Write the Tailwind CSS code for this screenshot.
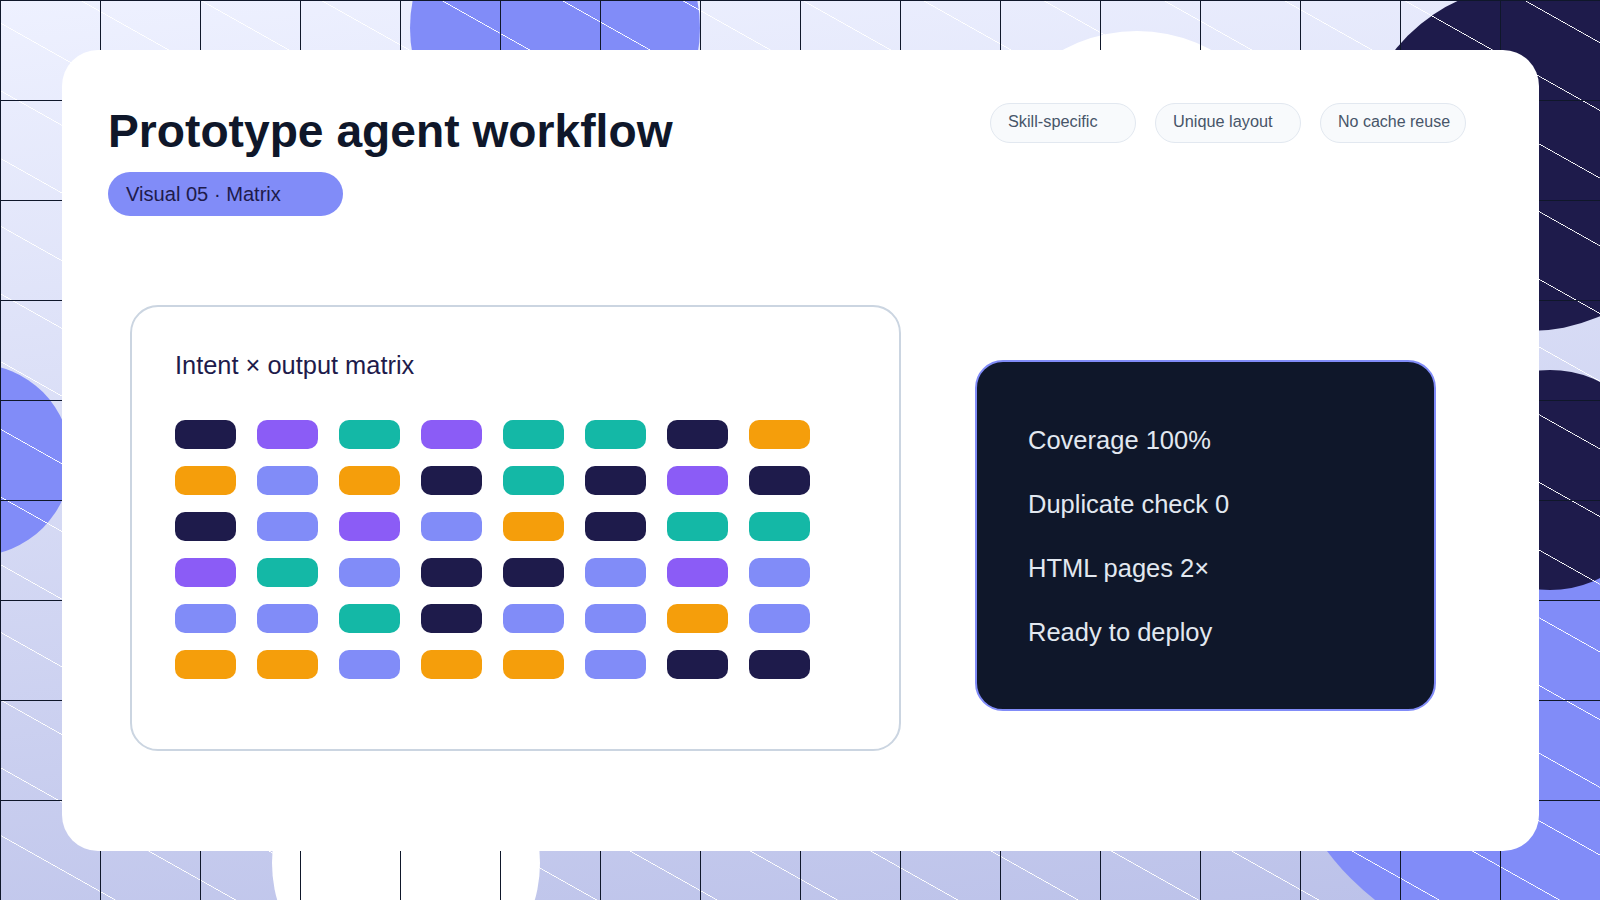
<!doctype html>
<html lang="en">
<head>
<meta charset="utf-8">
<title>Prototype agent workflow</title>
<script src="https://cdn.jsdelivr.net/npm/@tailwindcss/browser@4"></script>
</head>
<body class="m-0 overflow-hidden">
<div class="relative w-[1600px] h-[900px] overflow-hidden pt-[50px] pl-[62px] bg-[linear-gradient(174deg,#eef1ff,#bbc1e9)] font-['Liberation_Sans',Arial,sans-serif]">
  <!-- decorative circles -->
  <div class="absolute left-[410px] top-[-117px] w-[290px] h-[290px] rounded-full bg-[#818cf8]"></div>
  <div class="absolute left-[1357px] top-[-15px] w-[346px] h-[346px] rounded-full bg-[#1e1b4b]"></div>
  <div class="absolute left-[-121px] top-[364px] w-[192px] h-[192px] rounded-full bg-[#818cf8]"></div>
  <div class="absolute left-[982px] top-[31px] w-[310px] h-[310px] rounded-full bg-white"></div>
  <div class="absolute left-[272px] top-[729px] w-[268px] h-[268px] rounded-full bg-white"></div>
  <div class="absolute left-[1275px] top-[435px] w-[520px] h-[520px] rounded-full bg-[#818cf8]"></div>
  <div class="absolute left-[1440px] top-[370px] w-[220px] h-[220px] rounded-full bg-[#1e1b4b]"></div>
  <!-- grid and diagonal hatching -->
  <div class="absolute inset-0 bg-[repeating-linear-gradient(to_top_right,transparent_0_56px,#ffffff_56.3px_56.8px,transparent_57.1px_59px)]"></div>
  <div class="absolute inset-0 bg-[linear-gradient(#0f172a_1px,transparent_1px),linear-gradient(90deg,#0f172a_1px,transparent_1px)] bg-[length:100px_100px]"></div>

  <!-- card -->
  <main class="relative w-[1477px] h-[801px] rounded-[36px] bg-white pl-[46px] pr-[73px] pt-[53px]">
    <header class="flex justify-between items-start">
      <div class="flex flex-col items-start">
        <h1 class="m-0 text-[46.2px] leading-[56px] font-bold text-[#0f172a]">Prototype agent workflow</h1>
        <div class="mt-[13px] w-[235px] h-[44px] rounded-full bg-[#818cf8] pl-[18px] text-[20.1px] leading-[44px] text-[#1e1b4b]">Visual 05 · Matrix</div>
      </div>
      <ul class="flex gap-[19px] m-0 p-0 list-none">
        <li class="w-[146px] h-[40px] rounded-full border border-[#e2e8f0] bg-[#f8fafc] pl-[17px] text-[16.3px] leading-[35px] text-[#475569]">Skill-specific</li>
        <li class="w-[146px] h-[40px] rounded-full border border-[#e2e8f0] bg-[#f8fafc] pl-[17px] text-[16.3px] leading-[35px] text-[#475569]">Unique layout</li>
        <li class="w-[146px] h-[40px] rounded-full border border-[#e2e8f0] bg-[#f8fafc] pl-[17px] text-[16px] leading-[35px] text-[#475569]">No cache reuse</li>
      </ul>
    </header>

    <div class="flex items-start mt-[89px] ml-[22px]">
      <section class="w-[771px] h-[446px] shrink-0 rounded-[28px] border-2 border-[#cbd5e1] bg-white pl-[43px] pt-[43px]">
        <h2 class="m-0 text-[25.4px] leading-[30px] font-normal text-[#1e1b4b]">Intent × output matrix</h2>
        <div class="grid grid-cols-[repeat(8,61px)] auto-rows-[29px] gap-x-[21px] gap-y-[17px] mt-[40px]">
          <div class="rounded-[10px] bg-[#1e1b4b]"></div><div class="rounded-[10px] bg-[#8b5cf6]"></div><div class="rounded-[10px] bg-[#14b8a6]"></div><div class="rounded-[10px] bg-[#8b5cf6]"></div><div class="rounded-[10px] bg-[#14b8a6]"></div><div class="rounded-[10px] bg-[#14b8a6]"></div><div class="rounded-[10px] bg-[#1e1b4b]"></div><div class="rounded-[10px] bg-[#f59e0b]"></div>
          <div class="rounded-[10px] bg-[#f59e0b]"></div><div class="rounded-[10px] bg-[#818cf8]"></div><div class="rounded-[10px] bg-[#f59e0b]"></div><div class="rounded-[10px] bg-[#1e1b4b]"></div><div class="rounded-[10px] bg-[#14b8a6]"></div><div class="rounded-[10px] bg-[#1e1b4b]"></div><div class="rounded-[10px] bg-[#8b5cf6]"></div><div class="rounded-[10px] bg-[#1e1b4b]"></div>
          <div class="rounded-[10px] bg-[#1e1b4b]"></div><div class="rounded-[10px] bg-[#818cf8]"></div><div class="rounded-[10px] bg-[#8b5cf6]"></div><div class="rounded-[10px] bg-[#818cf8]"></div><div class="rounded-[10px] bg-[#f59e0b]"></div><div class="rounded-[10px] bg-[#1e1b4b]"></div><div class="rounded-[10px] bg-[#14b8a6]"></div><div class="rounded-[10px] bg-[#14b8a6]"></div>
          <div class="rounded-[10px] bg-[#8b5cf6]"></div><div class="rounded-[10px] bg-[#14b8a6]"></div><div class="rounded-[10px] bg-[#818cf8]"></div><div class="rounded-[10px] bg-[#1e1b4b]"></div><div class="rounded-[10px] bg-[#1e1b4b]"></div><div class="rounded-[10px] bg-[#818cf8]"></div><div class="rounded-[10px] bg-[#8b5cf6]"></div><div class="rounded-[10px] bg-[#818cf8]"></div>
          <div class="rounded-[10px] bg-[#818cf8]"></div><div class="rounded-[10px] bg-[#818cf8]"></div><div class="rounded-[10px] bg-[#14b8a6]"></div><div class="rounded-[10px] bg-[#1e1b4b]"></div><div class="rounded-[10px] bg-[#818cf8]"></div><div class="rounded-[10px] bg-[#818cf8]"></div><div class="rounded-[10px] bg-[#f59e0b]"></div><div class="rounded-[10px] bg-[#818cf8]"></div>
          <div class="rounded-[10px] bg-[#f59e0b]"></div><div class="rounded-[10px] bg-[#f59e0b]"></div><div class="rounded-[10px] bg-[#818cf8]"></div><div class="rounded-[10px] bg-[#f59e0b]"></div><div class="rounded-[10px] bg-[#f59e0b]"></div><div class="rounded-[10px] bg-[#818cf8]"></div><div class="rounded-[10px] bg-[#1e1b4b]"></div><div class="rounded-[10px] bg-[#1e1b4b]"></div>
        </div>
      </section>
      <section class="w-[461px] h-[351px] shrink-0 ml-[74px] mt-[55px] rounded-[28px] border-2 border-[#818cf8] bg-[#0f172a] pl-[51px] pt-[46px] text-[25.5px] leading-[64px] text-[#e2e8f0]">
        <p class="m-0">Coverage 100%</p>
        <p class="m-0">Duplicate check 0</p>
        <p class="m-0">HTML pages 2×</p>
        <p class="m-0">Ready to deploy</p>
      </section>
    </div>
  </main>
</div>
</body>
</html>
